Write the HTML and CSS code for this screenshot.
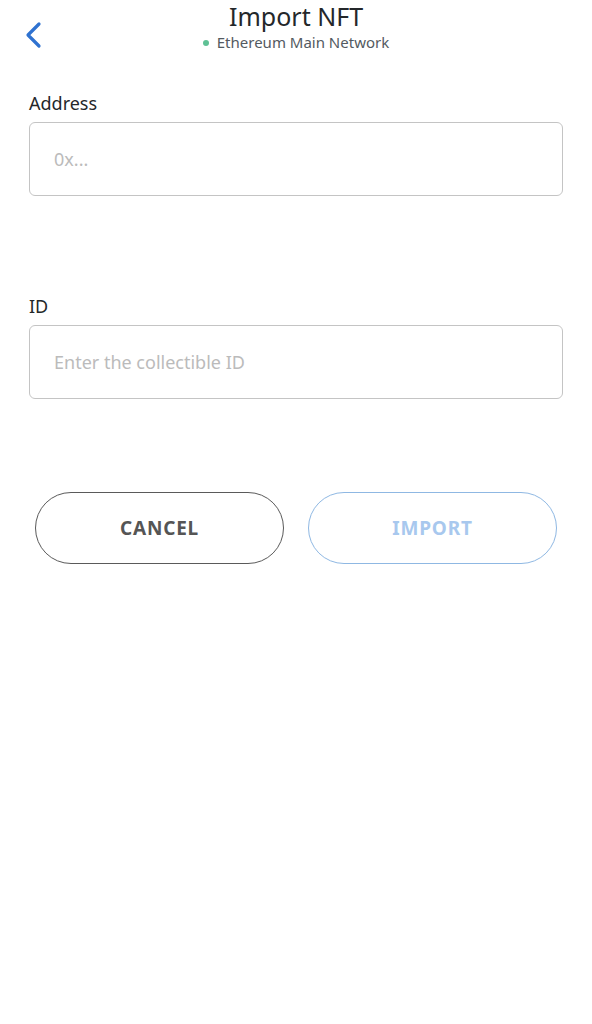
FILE: index.html
```html
<!DOCTYPE html>
<html lang="en">
<head>
    <meta charset="UTF-8">
    <meta name="viewport" content="width=device-width, initial-scale=1.0">
    <title>Import NFT</title>
    <link rel="stylesheet" href="styles.css">
</head>
<body>
    <header class="top-bar">
        <a class="back-link" href="#" aria-label="Back">
            <svg width="18" height="28" viewBox="0 0 18 28">
                <path d="M15 3 L4 14 L15 25" fill="none" stroke="#2f72d0" stroke-width="3.2" stroke-linecap="round" stroke-linejoin="round"/>
            </svg>
        </a>
        <div class="title-block">
            <h1 class="title">Import NFT</h1>
            <div class="network"><span class="network-dot"></span>Ethereum Main Network</div>
        </div>
    </header>
    <main class="form">
        <div class="field">
            <label for="address">Address</label>
            <input type="text" id="address" placeholder="0x...">
        </div>
        <div class="field field-id">
            <label for="token-id">ID</label>
            <input type="text" id="token-id" placeholder="Enter the collectible ID">
        </div>
        <div class="actions">
            <button class="btn btn-cancel">CANCEL</button>
            <button class="btn btn-import" disabled>IMPORT</button>
        </div>
    </main>
</body>
</html>
```

FILE: styles.css
```css
body {
    margin: 0;
    font-family: "Noto Sans", Arial, sans-serif;
    background-color: #fff;
    color: #24272a;
}

.top-bar {
    position: relative;
    height: 60px;
    display: flex;
    justify-content: center;
}

.back-link {
    position: absolute;
    left: 24px;
    top: 21px;
}

.title-block {
    text-align: center;
}

.title {
    margin: 0;
    font-size: 25px;
    font-weight: 400;
    line-height: 32px;
}

.network {
    font-size: 15px;
    color: #535a61;
    line-height: 20px;
}

.network-dot {
    display: inline-block;
    width: 6px;
    height: 6px;
    border-radius: 50%;
    background-color: #5fc195;
    margin-right: 8px;
    vertical-align: 2px;
}

.form {
    padding: 31px 29px 0;
}

.field label {
    display: block;
    font-size: 18px;
    line-height: 24px;
    margin-bottom: 7px;
}

.field input {
    box-sizing: border-box;
    width: 100%;
    height: 74px;
    padding: 0 24px;
    border: 1px solid #c4c4c4;
    border-radius: 6px;
    font-family: inherit;
    font-size: 18px;
    color: #24272a;
}

.field input::placeholder {
    color: #bbbbbb;
}

.field-id {
    margin-top: 98px;
}

.actions {
    display: flex;
    gap: 24px;
    margin-top: 93px;
    padding: 0 6px;
}

.btn {
    flex: 1;
    height: 72px;
    border-radius: 36px;
    background-color: #fff;
    font-family: inherit;
    font-size: 19px;
    font-weight: 700;
    letter-spacing: 0.8px;
}

.btn-cancel {
    border: 1.5px solid #5a5a5a;
    color: #555;
}

.btn-import {
    border: 1.5px solid #8fb8e3;
    color: #a8c8ee;
}
```
